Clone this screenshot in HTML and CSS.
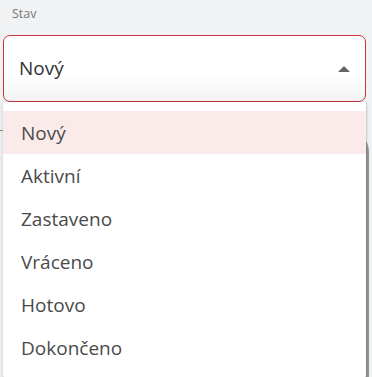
FILE: index.html
```html
<!DOCTYPE html>
<html lang="cs">
<head>
    <meta charset="UTF-8">
    <title>Stav</title>
    <link rel="stylesheet" href="styles.css">
</head>
<body>
    <div class="field">
        <label class="field-label">Stav</label>
        <div class="select-wrap">
            <div class="select open">
                <span class="select-value">Nový</span>
                <span class="caret"></span>
            </div>
            <ul class="menu">
                <li class="active">Nový</li>
                <li>Aktivní</li>
                <li>Zastaveno</li>
                <li>Vráceno</li>
                <li>Hotovo</li>
                <li>Dokončeno</li>
            </ul>
        </div>
        <div class="behind"></div>
    </div>
</body>
</html>
```

FILE: styles.css
```css
* {
    margin: 0;
    padding: 0;
    box-sizing: border-box;
}

body {
    font-family: 'Open Sans', 'Noto Sans', sans-serif;
    background: #f1f2f4;
    color: #444;
    overflow: hidden;
}

.field {
    padding: 5px 6px 0 3px;
}

.field-label {
    display: block;
    font-size: 12.5px;
    line-height: 17px;
    color: #777;
    padding-left: 9px;
    margin-bottom: 13px;
}

.select-wrap {
    position: relative;
}

.select {
    height: 67px;
    display: flex;
    align-items: center;
    justify-content: space-between;
    padding: 0 15px 0 15px;
    background: linear-gradient(#fff 60%, #f2f2f3);
    border: 1px solid #c9333d;
    border-radius: 7px;
}

.select-value {
    font-size: 19px;
    color: #333;
    padding-bottom: 2px;
}

.caret {
    width: 0;
    height: 0;
    border-left: 6px solid transparent;
    border-right: 6px solid transparent;
    border-bottom: 6px solid #666;
    margin-top: 1px;
}

.menu {
    position: absolute;
    top: 100%;
    left: 0;
    right: 0;
    z-index: 2;
    list-style: none;
    background: #fff;
    padding: 9px 0;
    border-radius: 0 0 4px 4px;
    box-shadow: 0 2px 4px rgba(0, 0, 0, 0.16), 1px 0 2px rgba(0, 0, 0, 0.1);
}

.menu li {
    height: 43px;
    display: flex;
    align-items: center;
    padding-left: 18px;
    font-size: 19px;
    color: #4a4a4a;
}

.menu li.active {
    background: #fbeaea;
}

.behind {
    height: 400px;
    margin: 28px -3px 0 -3px;
    border-top: 1px solid #888;
    border-right: 3px solid #999;
    border-top-right-radius: 22px;
}
```
